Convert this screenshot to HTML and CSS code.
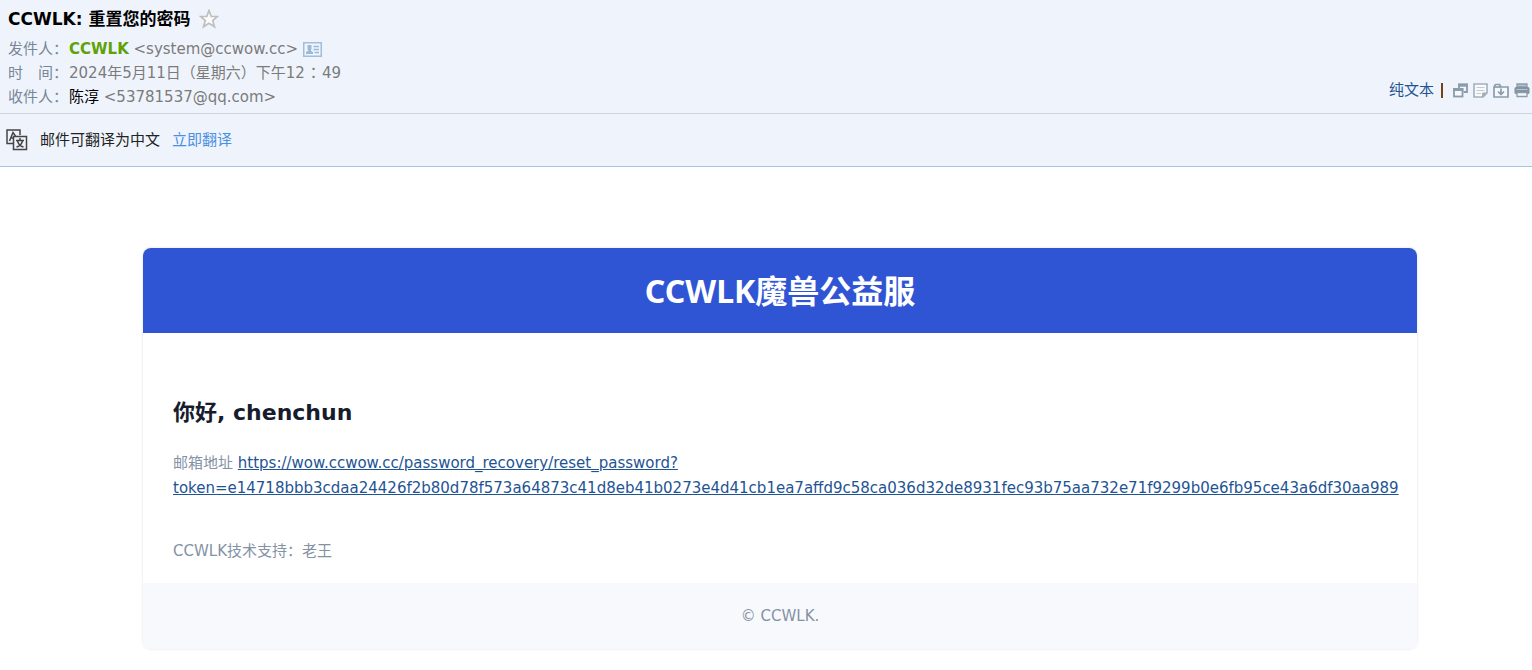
FILE: index.html
```html
<!DOCTYPE html>
<html lang="zh-CN">
<head>
<meta charset="utf-8">
<title>CCWLK: 重置您的密码</title>
<link rel="stylesheet" href="styles.css">
</head>
<body>
<header class="mail-head">
  <div class="subject-row">
    <h1 class="subject">CCWLK: 重置您的密码</h1>
    <button class="icon-btn" type="button" aria-label="星标">
      <svg width="20" height="20" viewBox="0 0 20 20"><path d="M10 1.500 12.200 7.300 18.500 7.500 13.700 11.500 15.500 17.800 10 14.300 4.500 17.800 6.300 11.500 1.500 7.500 7.800 7.300Z" fill="#fcfcfc" stroke="#bfbfbf" stroke-width="1.700"/></svg>
    </button>
  </div>
  <div class="head-body">
    <dl class="meta">
      <div class="meta-row">
        <dt>发件人：</dt>
        <dd><b class="sender">CCWLK</b> &lt;system@ccwow.cc&gt;
          <button class="icon-btn card-btn" type="button" aria-label="联系人">
            <svg width="19" height="15" viewBox="0 0 19 15"><rect x=".75" y=".75" width="17.500" height="13.500" fill="#eef5fc" stroke="#a3bdd8" stroke-width="1.500"/><path d="M4.500 3H8.500V7L7.700 8.500 10 10V12H3V10L5.300 8.500 4.500 7Z" fill="#9bb9d8"/><path d="M10.500 4.500H16M10.500 7.500H16M11.500 10.500H16" stroke="#9bb9d8" stroke-width="1.300"/></svg>
          </button>
        </dd>
      </div>
      <div class="meta-row"><dt>时　间：</dt><dd>2024年5月11日（星期六）下午12<span class="colon" lang="zh-TW">：</span>49</dd></div>
      <div class="meta-row"><dt>收件人：</dt><dd><span class="recipient">陈淳</span> &lt;53781537@qq.com&gt;</dd></div>
    </dl>
    <div class="tools">
      <a class="plain" href="#">纯文本</a>
      <span class="divider"></span>
      <button class="icon-btn" type="button" aria-label="新窗口打开">
        <svg width="15" height="15" viewBox="0 0 15 15" fill="none" stroke="#8b9cab" stroke-width="1.800"><path d="M6 5V1.500H14V9H10.500"/><path d="M5.100 2.200H14.900" stroke-width="3"/><rect x="1" y="6" width="8.500" height="7.500" fill="#f5f8fc"/><path d="M.1 6.500H10.400" stroke-width="3"/></svg>
      </button>
      <button class="icon-btn" type="button" aria-label="记事">
        <svg width="15" height="15" viewBox="0 0 15 15" fill="#f8fafc" stroke="#a3b0bc" stroke-width="1.600"><path d="M1 1H14V10L10 14H1Z"/><path d="M3.500 4.500H11.500M3.500 7.500H11.500M3.500 10.500H8" stroke="#c1cad2" stroke-width="1.200"/><path d="M9.500 14V10H14Z" fill="#a3b0bc" stroke-width="1"/></svg>
      </button>
      <button class="icon-btn" type="button" aria-label="附件收藏">
        <svg width="16" height="15" viewBox="0 0 16 15" fill="none" stroke="#8b9cab" stroke-width="1.700"><path d="M1 14V4L2.500 1.500H6.500L8 4H15V14Z" fill="#f5f8fc"/><path d="M1 4H8"/><path d="M8 5.500V11M5 8.500 8 11.500 11 8.500"/></svg>
      </button>
      <button class="icon-btn" type="button" aria-label="打印">
        <svg width="16" height="15" viewBox="0 0 16 15"><path d="M3 1H13V4H3Z" fill="#b5c0ca" stroke="#8b9cab" stroke-width="1.300"/><rect x=".5" y="4" width="15" height="7" rx="1.500" fill="#8293a3"/><path d="M2.500 6.500H13.500" stroke="#b9c4ce"/><path d="M3 9.500H13V13.500H3Z" fill="#f5f8fc" stroke="#8b9cab" stroke-width="1.300"/></svg>
      </button>
    </div>
  </div>
</header>
<section class="translate">
  <svg width="22" height="22" viewBox="0 0 22 22" fill="none" stroke="#444" stroke-width="1.500"><path d="M7 14.500H1V1H14V6"/><path d="M3.500 12 7 3.500 9.500 7M5 9H7"/><rect x="7.500" y="7.500" width="13" height="13"/><path d="M14 9V11M10 11.500H18M11.500 12Q13 17 17.500 18M16.500 12Q15 17 10.500 18"/></svg>
  <span>邮件可翻译为中文</span>
  <a href="#">立即翻译</a>
</section>
<main class="mail-body">
  <article class="card">
    <h2 class="brand">CCWLK魔兽公益服</h2>
    <div class="content">
      <h3 class="greeting">你好, chenchun</h3>
      <p class="address">邮箱地址 <a href="#">https://wow.ccwow.cc/password_recovery/reset_password?<wbr>token=e14718bbb3cdaa24426f2b80d78f573a64873c41d8eb41b0273e4d41cb1ea7affd9c58ca036d32de8931fec93b75aa732e71f9299b0e6fb95ce43a6df30aa989</a></p>
      <p class="support">CCWLK技术支持：老王</p>
    </div>
    <footer class="card-foot">© CCWLK.</footer>
  </article>
</main>
</body>
</html>
```
FILE: styles.css
```css
* { box-sizing: border-box; }
body {
  margin: 0;
  background: #fff;
  color: #000;
  font: 15px/24px "DejaVu Sans", "Noto Sans CJK SC", sans-serif;
}
h1, h2, h3, p, dl, dd { margin: 0; }
a { color: #1e5494; }
.icon-btn {
  display: inline-flex;
  padding: 0;
  border: 0;
  background: none;
  cursor: pointer;
}
.mail-head {
  padding: 6px 2px 4px 8px;
  background: #eff4fc;
  border-bottom: 1px solid #ccd5df;
}
.subject-row { display: flex; align-items: center; gap: 9px; height: 26px; margin-bottom: 5px; }
.subject { font-size: 17px; line-height: 26px; }
.head-body { display: flex; justify-content: space-between; align-items: flex-end; }
.meta { color: #7b7b7b; }
.meta-row { display: flex; gap: 1px; height: 24px; }
.meta dt { color: #798699; }
.sender { color: #5fa207; }
.recipient { color: #000; }
.colon { padding: 0 1px; font-family: "Noto Sans CJK TC", sans-serif; line-height: 1; }
.card-btn { vertical-align: middle; }
.tools { display: flex; align-items: center; gap: 5px; padding-bottom: 7px; }
.plain { text-decoration: none; }
.divider { width: 2px; height: 15px; margin: 0 5px 0 2px; background: #734219; }
.translate {
  display: flex;
  align-items: center;
  gap: 12px;
  height: 53px;
  padding-left: 6px;
  background: #eff4fc;
  border-bottom: 1px solid #a8c3dd;
  color: #222;
}
.translate a { color: #4a90e2; text-decoration: none; }
.mail-body { padding: 81px 115px 20px 143px; }
.card {
  border-radius: 8px;
  box-shadow: 0 0 3px rgba(0, 0, 0, 0.12);
  overflow: hidden;
}
.brand {
  padding: 20px;
  background: #2f55d4;
  color: #fff;
  font: bold 32px/45px "Noto Sans", "Noto Sans CJK SC", sans-serif;
  text-align: center;
}
.content { padding: 60px 30px 19px; }
.greeting { color: #161c2d; font-size: 22px; line-height: 40px; }
.address { margin-top: 18px; color: #8492a6; line-height: 25px; }
.support { margin-top: 38px; color: #8492a6; line-height: 25px; }
.card-foot {
  padding: 20px;
  background: #f8f9fc;
  color: #8492a6;
  line-height: 26px;
  text-align: center;
}
```
